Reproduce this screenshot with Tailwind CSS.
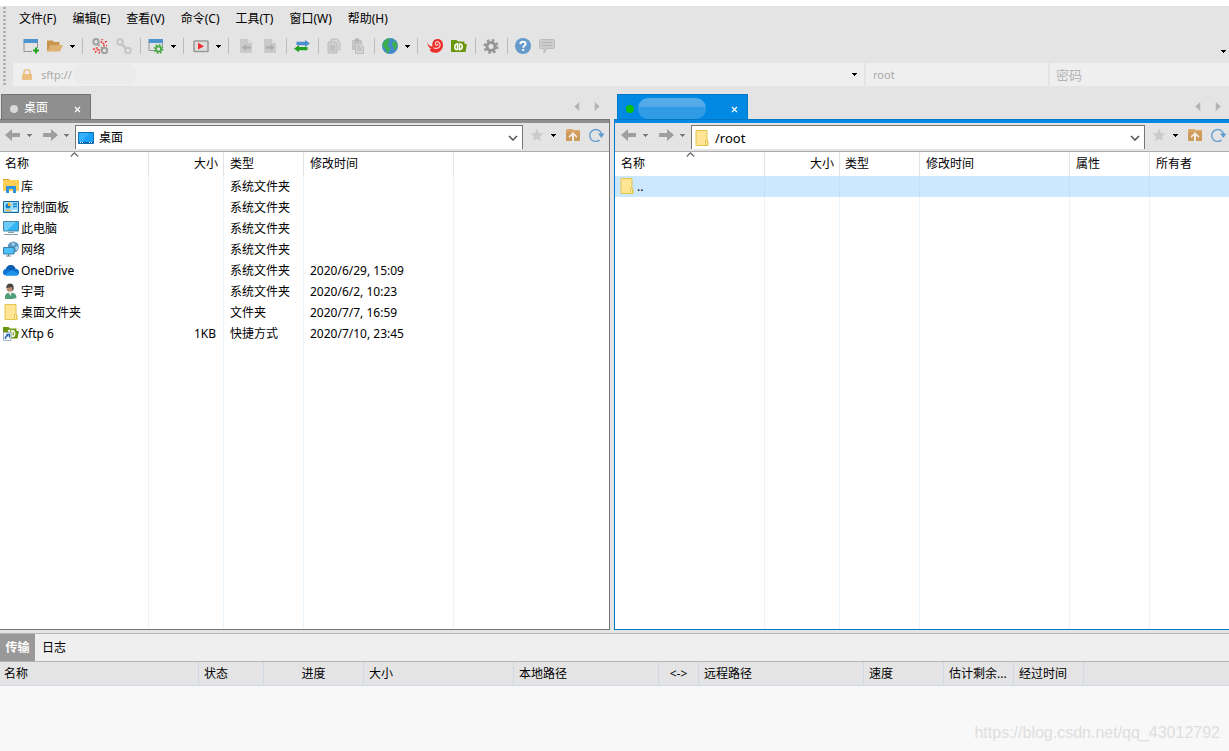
<!DOCTYPE html>
<html lang="zh-CN">
<head>
<meta charset="utf-8">
<meta name="viewport" content="width=device-width, initial-scale=1">
<title>Xftp 6</title>
<script src="https://cdn.jsdelivr.net/npm/@tailwindcss/browser@4"></script>
</head>
<body class="flex h-screen flex-col overflow-hidden bg-[#e4e4e4] font-['Noto_Sans','Noto_Sans_CJK_SC',sans-serif] text-xs text-black">

<svg class="hidden" aria-hidden="true">
  <symbol id="caret" viewBox="0 0 5 3"><path d="M0 0h5v1H4v1H3v1H2V2H1V1H0z" fill="currentColor"/></symbol>
  <symbol id="x" viewBox="0 0 7 7"><path d="M1 1l5 5M6 1L1 6" stroke="currentColor" stroke-width="1.1"/></symbol>
  <symbol id="tri-l" viewBox="0 0 6 10"><path d="M5.500 0v10L0 5z" fill="#b4b4b4"/></symbol>
  <symbol id="tri-r" viewBox="0 0 6 10"><path d="M.5 0v10L6 5z" fill="#b4b4b4"/></symbol>
  <symbol id="back" viewBox="0 0 16 12"><path d="M0 6l7-6v4h8v4H7v4z" fill="#9f9f9f"/></symbol>
  <symbol id="fwd" viewBox="0 0 16 12"><path d="M16 6L9 0v4H1v4h8v4z" fill="#9f9f9f"/></symbol>
  <symbol id="chev" viewBox="0 0 10 6"><path d="M1 1l4 4 4-4" fill="none" stroke="#444" stroke-width="1.300"/></symbol>
  <symbol id="sort" viewBox="0 0 9 5"><path d="M.8 4.500L4.500.8l3.700 3.700" fill="none" stroke="#666" stroke-width="1.200"/></symbol>
  <symbol id="star" viewBox="0 0 14 14"><path d="M7 .8l1.900 4.100 4.400.5-3.300 3 .9 4.500L7 10.700l-3.900 2.200.9-4.500-3.300-3 4.400-.5z" fill="#cbcbcb"/></symbol>
  <symbol id="up" viewBox="0 0 16 14"><path d="M1 2.500L2 1h5l1.500 1H15v11H1z" fill="#d9a766"/><path d="M1 13V5l2-1h12v9z" fill="#cf9b5c"/><path d="M8 4L3.500 8.500l1 1.200L7 7.500V13h2V7.500l2.500 2.200 1-1.200z" fill="#f1ece5"/></symbol>
  <symbol id="refresh" viewBox="0 0 16 14"><path d="M10.500 12.200A6 6 0 1 1 12.600 6" fill="none" stroke="#6ba2d3" stroke-width="1.500"/><path d="M9 5.500h6.500L12.300 10z" fill="#5b9bd1"/></symbol>
  <symbol id="folder" viewBox="0 0 14 16"><path d="M1 .5h11v11h1v4H1z" fill="#ffe594" stroke="#e5c44d"/><path d="M10.500 10.500h2v5h-2z" fill="#ffefb2" stroke="#e5c44d"/></symbol>
  <symbol id="desk" viewBox="0 0 16 12"><path d="M.5.500h15v11H.5z" fill="#18a0fb" stroke="#0b6db3"/><path d="M1 1h10L4 10H1z" fill="#35b2ff"/><path d="M1 10h14v1H1z" fill="#0c5e9c"/><path d="M2 10h1v1H2zM4 10h1v1H4zM11 10h1v1h-1zM13 10h1v1h-1z" fill="#fff"/></symbol>
  <symbol id="doc" viewBox="0 0 16 16"><path d="M2 1h8l4 4v10H2z" fill="#cacaca"/><path d="M10 1v4h4z" fill="#dedede"/></symbol>
</svg>

<div class="h-1.5 shrink-0 bg-white"></div>

<header class="flex shrink-0 pb-2">
  <div class="ml-[3px] w-[3px] shrink-0 bg-[radial-gradient(circle,#a9a9a9_1px,transparent_1.5px)] bg-[size:3px_4px]"></div>
  <div class="min-w-0 grow pl-[7px]">
    <nav class="flex h-[25px] items-center gap-4 pl-1.5 leading-5" aria-label="主菜单">
      <button>文件(F)</button><button>编辑(E)</button><button>查看(V)</button><button>命令(C)</button><button>工具(T)</button><button>窗口(W)</button><button>帮助(H)</button>
    </nav>
    <div class="flex h-8 items-center pb-0.5 pl-1.5" role="toolbar" aria-label="工具栏">
      <button class="flex w-6 justify-center" aria-label="新建"><svg class="size-4" viewBox="0 0 16 16"><path d="M1 4v9.500h8M14.500 4v6" fill="none" stroke="#929292"/><path d="M.5 1h14.500v4H.5z" fill="#4d93ce"/><path d="M10 12.500h6M13 9.500v6" stroke="#21a321" stroke-width="2"/></svg></button>
      <button class="flex w-6 justify-center" aria-label="打开"><svg class="size-4" viewBox="0 0 16 16"><path d="M0 13V2.500h5.500L7 4h5.500v3H4l-3 6z" fill="#c9954f"/><path d="M4 7h12l-3 6.500H0z" fill="#dfb171"/></svg></button>
      <button class="flex w-[10px] justify-center" aria-label="打开菜单"><svg class="h-[3px] w-[5px]"><use href="#caret"/></svg></button>
      <span class="flex h-4 w-[11px] justify-center"><i class="w-px bg-[#bcbcbc]"></i></span>
      <button class="flex w-6 justify-center" aria-label="断开"><svg class="size-4" viewBox="0 0 16 16"><g fill="none" stroke="#a0a0a0" stroke-width="2"><circle cx="4" cy="3.700" r="2.700"/><circle cx="12.500" cy="12.500" r="2.700"/><path d="M5.500 6l2 2M10.500 10.500L9 9"/></g><path d="M9 5l1.500-4M10.500 6l4.500-3M11 7.500h4M1 11.500l5-2M3 14.500l4-4M7 15.500l1-4" stroke="#ee3b3b" stroke-width="1.500" stroke-dasharray="2 1"/></svg></button>
      <button class="flex w-6 justify-center" aria-label="连接" disabled><svg class="size-4" viewBox="0 0 16 16"><g fill="none" stroke="#c6c6c6" stroke-width="2"><circle cx="4" cy="4" r="2.800"/><circle cx="12" cy="12.500" r="2.800"/><path d="M5.500 6l5 5" stroke-width="3"/></g></svg></button>
      <span class="flex h-4 w-2 justify-center"><i class="w-px bg-[#bcbcbc]"></i></span>
      <button class="flex w-6 justify-center" aria-label="属性"><svg class="size-4" viewBox="0 0 16 16"><path d="M1 4v8.500h6M14.500 4v4" fill="none" stroke="#929292"/><path d="M.5 1h14.500v4H.5z" fill="#4d93ce"/><circle cx="10.500" cy="11" r="2.600" fill="none" stroke="#45a845" stroke-width="1.800"/><circle cx="10.500" cy="11" r="4.200" fill="none" stroke="#45a845" stroke-width="1.500" stroke-dasharray="1.700 1.600"/></svg></button>
      <button class="flex w-[10px] justify-center" aria-label="属性菜单"><svg class="h-[3px] w-[5px]"><use href="#caret"/></svg></button>
      <span class="flex h-4 w-[11px] justify-center"><i class="w-px bg-[#bcbcbc]"></i></span>
      <button class="flex w-6 justify-center" aria-label="运行"><svg class="size-4" viewBox="0 0 16 16"><rect x="1" y="3" width="14" height="10.500" rx=".8" fill="#dedede" stroke="#999" stroke-width="1.600"/><path d="M5 4.800l6 3.400-6 3.400z" fill="#ee2b30"/></svg></button>
      <button class="flex w-[10px] justify-center" aria-label="运行菜单"><svg class="h-[3px] w-[5px]"><use href="#caret"/></svg></button>
      <span class="flex h-4 w-[11px] justify-center"><i class="w-px bg-[#bcbcbc]"></i></span>
      <button class="flex w-6 justify-center" aria-label="下载" disabled><svg class="size-4" viewBox="0 0 16 16"><use href="#doc"/><path d="M4 9.500L8 6v2.200h4.500v2.600H8V13z" fill="#adadad"/></svg></button>
      <button class="flex w-6 justify-center" aria-label="上传" disabled><svg class="size-4" viewBox="0 0 16 16"><use href="#doc"/><path d="M12.500 9.500L8.500 6v2.200H4v2.600h4.500V13z" fill="#adadad"/></svg></button>
      <span class="flex h-4 w-2 justify-center"><i class="w-px bg-[#bcbcbc]"></i></span>
      <button class="flex w-6 justify-center" aria-label="同步"><svg class="size-4" viewBox="0 0 16 16"><path d="M2.500 3.800H11V2l5 3.500L11 9V7.200H2.500z" fill="#4b8fd0"/><path d="M13.500 9H5V7L0 10.700l5 3.500v-2H13.500z" fill="#22a022"/></svg></button>
      <span class="flex h-4 w-2 justify-center"><i class="w-px bg-[#bcbcbc]"></i></span>
      <button class="flex w-6 justify-center" aria-label="复制" disabled><svg class="size-4" viewBox="0 0 16 16"><path d="M5 1h6l3 3v8H5z" fill="#d5d5d5" stroke="#bdbdbd"/><path d="M2 4h7l2 2v9H2z" fill="#cecece" stroke="#bdbdbd"/><path d="M4 8h5M4 10h5M4 12h5" stroke="#b3b3b3"/></svg></button>
      <button class="flex w-6 justify-center" aria-label="粘贴" disabled><svg class="size-4" viewBox="0 0 16 16"><path d="M2 2h10v10H2z" fill="#c4c4c4"/><path d="M5 .5h4v3H5z" fill="#b2b2b2"/><path d="M5.500 5.500h5l3 3v7h-8z" fill="#d5d5d5" stroke="#bdbdbd"/><path d="M7 10h5M7 12h5M7 8h3" stroke="#b3b3b3"/></svg></button>
      <span class="flex h-4 w-2 justify-center"><i class="w-px bg-[#bcbcbc]"></i></span>
      <button class="flex w-6 justify-center" aria-label="语言"><svg class="size-4" viewBox="0 0 16 16"><circle cx="8" cy="8" r="8" fill="#4489c9"/><path d="M1.500 4Q3.500 .8 7 .3L8 1.500 6.500 3l1 1.200L5.500 5.500l.7 1.500-1.700.8 3.500 1.700.3 2-1.800 1.800-.5 2-1.500-.8-.7-3.500L1 8.500Q.5 6 1.500 4zM10.500 4.500L13 3l1.700 2.500.5 3-1.700 3.300-1.700-.8-.3-2.500-1.500-1.500zM10.500 1l2 .8-1.500.9z" fill="#3eb049"/></svg></button>
      <button class="flex w-[10px] justify-center" aria-label="语言菜单"><svg class="h-[3px] w-[5px]"><use href="#caret"/></svg></button>
      <span class="flex h-4 w-[11px] justify-center"><i class="w-px bg-[#bcbcbc]"></i></span>
      <button class="flex w-6 justify-center" aria-label="Xshell"><svg class="size-4" viewBox="0 0 16 16"><path d="M0 4q2 4.500 5.500 4.500C4.500 4 7 1 10.500 1 14 1 16 3.500 16 7c0 4.500-3.500 7.800-7.500 7.800-3.500 0-5-1.300-6-3.300l2-.4Q1 9.500 0 4z" fill="#ed2f2b"/><path d="M6.500 9.800c4 1.700 6.800-.6 6.600-3.100C13 4.500 11.400 3.500 9.900 3.700 8.500 4 7.900 5.600 8.600 6.700c.8 1 2.500.6 2.300-.9" fill="none" stroke="#f8dada" stroke-width="1.100"/></svg></button>
      <button class="flex w-6 justify-center" aria-label="Xftp"><svg class="size-4" viewBox="0 0 16 16"><path d="M0 2h5.500L7 3.500h6.500V6H16l-1.500 8H0z" fill="#6a960c"/><path d="M6.500 12V5.800Q3.800 6.300 3.800 9T6 11.800M8.500 5.500v6.300Q11.300 11.500 11.300 8.800T9 5.900" fill="none" stroke="#fff" stroke-width="1.500"/></svg></button>
      <span class="flex h-4 w-2 justify-center"><i class="w-px bg-[#bcbcbc]"></i></span>
      <button class="flex w-6 justify-center" aria-label="选项"><svg class="size-4" viewBox="0 0 16 16"><circle cx="8" cy="8.500" r="6.300" fill="none" stroke="#969696" stroke-width="2.400" stroke-dasharray="2.550 2.400"/><circle cx="8" cy="8.500" r="4" fill="none" stroke="#969696" stroke-width="3"/></svg></button>
      <span class="flex h-4 w-2 justify-center"><i class="w-px bg-[#bcbcbc]"></i></span>
      <button class="flex w-6 justify-center" aria-label="帮助"><svg class="size-4" viewBox="0 0 16 16"><circle cx="8" cy="8" r="8" fill="#659acd"/><path d="M5.300 6.200Q5.500 3.800 8 3.800q2.600 0 2.600 2.200C10.600 7.500 8.200 7.800 8.200 9.700M8.200 11v2" fill="none" stroke="#fff" stroke-width="1.900"/></svg></button>
      <button class="flex w-6 justify-center" aria-label="反馈" disabled><svg class="size-4" viewBox="0 0 16 16"><path d="M1.500 1.500h13q1 0 1 1v7q0 1-1 1H8l-3 4.500v-4.500H1.500q-1 0-1-1v-7q0-1 1-1z" fill="#cdcdcd" stroke="#bdbdbd"/><path d="M3 4.500h10M3 7.500h10" stroke="#b5b5b5"/></svg></button>
      <button class="ml-auto flex w-3 justify-center self-end pb-2" aria-label="更多"><svg class="h-[3px] w-[5px]"><use href="#caret"/></svg></button>
    </div>
    <form class="grid h-[23px] grid-cols-[851fr_182fr_179fr] gap-[2px] text-[#a9a9a9]">
      <div class="flex min-w-0 items-center bg-[#efefef] pl-[9px] pr-1">
        <svg class="h-3 w-2.5 shrink-0" viewBox="0 0 10 12"><path d="M2 6V3.500a3 3 0 0 1 6 0V6" fill="none" stroke="#ecbf82" stroke-width="1.600"/><rect y="5" width="10" height="6" rx=".8" fill="#ecbf82"/></svg>
        <label class="relative ml-[9px] flex min-w-0 grow"><span class="sr-only">主机</span><input class="h-[22px] w-full text-[11px] leading-[22px] outline-none" value="sftp://"><span class="absolute left-8 top-0 h-5 w-16 rounded-[9px] bg-[#ebebeb]"></span></label>
        <button type="button" class="flex w-3 justify-center text-black" aria-label="历史记录"><svg class="h-[3px] w-[5px]"><use href="#caret"/></svg></button>
      </div>
      <input class="min-w-0 bg-[#efefef] px-[7px] text-[11px] leading-5 outline-none" aria-label="用户名" value="root">
      <input type="text" class="min-w-0 bg-[#efefef] px-[6px] text-[13px] leading-5 outline-none placeholder:text-[#b4b4b4]" aria-label="密码" placeholder="密码">
    </form>
  </div>
</header>

<main class="grid min-h-0 grow grid-cols-[610fr_615fr] gap-1">
  <section class="flex min-w-0 flex-col" aria-label="本地">
    <div class="flex h-[25px] shrink-0 items-center pl-px">
      <div class="flex h-full w-[90px] items-center border border-b-0 border-[#747474] bg-[#8f8f8f] pl-2 pr-[7px] text-white">
        <span class="mt-1 size-2 rounded-full bg-[#d8d8d8]"></span>
        <button class="ml-1.5 mt-0.5 leading-5">桌面</button>
        <button class="ml-auto flex size-3 items-center justify-center" aria-label="关闭标签"><svg class="mt-1 size-[7px] shrink-0"><use href="#x"/></svg></button>
      </div>
      <button class="ml-auto flex w-5 justify-center" aria-label="上一个"><svg class="h-[9px] w-1.5"><use href="#tri-l"/></svg></button>
      <button class="mr-[3px] flex w-5 justify-center" aria-label="下一个"><svg class="h-[9px] w-1.5"><use href="#tri-r"/></svg></button>
    </div>
    <div class="flex min-h-0 grow flex-col border-b border-r border-t border-[#777777]">
      <div class="h-[3px] shrink-0 bg-[#8f8f8f]"></div>
      <div class="flex h-[29px] shrink-0 items-center border-b border-[#adadad] pb-1 pl-[5px]">
        <button aria-label="后退"><svg class="h-3 w-4"><use href="#back"/></svg></button>
        <button class="ml-1.5 text-[#777777]" aria-label="后退记录"><svg class="h-[3px] w-[5px]"><use href="#caret"/></svg></button>
        <button class="ml-[10px]" aria-label="前进"><svg class="h-3 w-4"><use href="#fwd"/></svg></button>
        <button class="ml-1.5 text-[#777777]" aria-label="前进记录"><svg class="h-[3px] w-[5px]"><use href="#caret"/></svg></button>
        <label class="ml-1.5 mt-1 flex h-6 min-w-0 grow items-center border border-b-0 border-[#777777] bg-white pl-0.5 pr-1">
          <svg class="h-3 w-4 shrink-0"><use href="#desk"/></svg>
          <span class="sr-only">本地路径</span>
          <input class="ml-[5px] h-[22px] min-w-0 grow leading-[22px] outline-none" value="桌面">
          <svg class="h-1.5 w-2.5 shrink-0"><use href="#chev"/></svg>
        </label>
        <button class="ml-[7px]" aria-label="收藏"><svg class="size-3.5"><use href="#star"/></svg></button>
        <button class="ml-[7px]" aria-label="收藏菜单"><svg class="h-[3px] w-[5px]"><use href="#caret"/></svg></button>
        <button class="ml-[9px]" aria-label="上级"><svg class="h-3.5 w-4"><use href="#up"/></svg></button>
        <button class="ml-2 mr-1" aria-label="刷新"><svg class="h-3.5 w-4"><use href="#refresh"/></svg></button>
      </div>
      <div class="min-h-0 grow overflow-hidden bg-white">
        <table class="h-full w-full table-fixed border-separate border-spacing-0 text-left leading-5 [&_div>svg]:mb-0.5 [&_div>svg]:size-4 [&_td]:whitespace-nowrap [&_td]:border-r [&_td]:border-[#e9f1fb] [&_th]:border-r [&_th]:border-[#e3e3e3] [&_th]:font-normal [&_tr>:last-child]:border-r-0">
          <colgroup><col class="w-[149px]"><col class="w-[75px]"><col class="w-[80px]"><col class="w-[150px]"><col></colgroup>
          <thead><tr class="h-6"><th class="relative pl-[5px]">名称<svg class="absolute left-[70px] top-0 h-[5px] w-[9px]"><use href="#sort"/></svg></th><th class="pr-[5px] text-right">大小</th><th class="pl-1.5">类型</th><th class="pl-1.5">修改时间</th><td></td></tr></thead>
          <tbody>
            <tr class="h-[21px]"><td class="pl-[3px]"><div class="flex items-center gap-0.5"><svg viewBox="0 0 16 16"><path d="M0 1h6l1 1.500H0z" fill="#dc9a0c"/><path d="M0 3l7-1h9v11H0z" fill="#ffcf55"/><path d="M3 8h10v7h-3v-4H6v4H3z" fill="#2e92dd"/></svg>库</div></td><td></td><td class="pl-1.5">系统文件夹</td><td></td><td></td></tr>
            <tr class="h-[21px]"><td class="pl-[3px]"><div class="flex items-center gap-0.5"><svg viewBox="0 0 16 16"><path d="M.5 2.500h15v11H.5z" fill="#9bdcff" stroke="#1269a3"/><circle cx="5" cy="7" r="2.500" fill="#1482cf"/><path d="M5 7V3.500A3 3 0 0 1 8 7z" fill="#f6b12c"/><path d="M10 5h4M10 7.500h4" stroke="#1482cf" stroke-width="1.500"/><path d="M2.500 11.500h5" stroke="#f6b12c" stroke-width="1.500"/><path d="M9 11.500h5" stroke="#fff"/></svg>控制面板</div></td><td></td><td class="pl-1.5">系统文件夹</td><td></td><td></td></tr>
            <tr class="h-[21px]"><td class="pl-[3px]"><div class="flex items-center gap-0.5"><svg viewBox="0 0 16 16"><path d="M.5 1.500h15v9.500H.5z" fill="#30b4f5" stroke="#4b87a5"/><path d="M1 2h12L4 10.500H1z" fill="#6bcbfb"/><path d="M5 12.500h6M1 14.500h14" stroke="#8ba0ad"/></svg>此电脑</div></td><td></td><td class="pl-1.5">系统文件夹</td><td></td><td></td></tr>
            <tr class="h-[21px]"><td class="pl-[3px]"><div class="flex items-center gap-0.5"><svg viewBox="0 0 16 16"><circle cx="10.300" cy="6" r="5.600" fill="#5798c5"/><path d="M8 2l3-.5 1 2-2 2zM12 6l3-1v3l-2 1.500z" fill="#a9cfe6"/><path d="M.5 6.500h10.500v6.500H.5z" fill="#4dc0fb" stroke="#3a7ea5"/><path d="M5.500 13v2M3 15h5" stroke="#62869b"/></svg>网络</div></td><td></td><td class="pl-1.5">系统文件夹</td><td></td><td></td></tr>
            <tr class="h-[21px]"><td class="pl-[3px]"><div class="flex items-center gap-0.5"><svg viewBox="0 0 16 16"><path d="M3.500 13.500Q0 13.500 0 10.500 0 7.300 3 6.800 4.500 3 8 3q3 0 4.300 3.500Q16 7 16 10.300t-3 3.200z" fill="#0d72d2"/><path d="M3 6.800Q4.500 3 8 3q3 0 4.300 3.500L9 8z" fill="#0b5cad"/><path d="M1.500 12.800L9 8l6.500 3.800q-.8 1.700-2.500 1.700H3.500z" fill="#1f94ec"/></svg>OneDrive</div></td><td></td><td class="pl-1.5">系统文件夹</td><td class="pl-1.5">2020/6/29, 15:09</td><td></td></tr>
            <tr class="h-[21px]"><td class="pl-[3px]"><div class="flex items-center gap-0.5"><svg viewBox="0 0 16 16"><path d="M2 16q-.5-5 2.500-6l3-.7 3 .7q3 1 3 5l-4 1z" fill="#4f9e78"/><path d="M5 9l2.500 4L9 9z" fill="#e8ece8"/><circle cx="6.800" cy="5.500" r="3.200" fill="#bd8d70"/><path d="M3.300 5Q3 .5 7.500.5q4 .5 3 6.500L9.500 8 9 4z" fill="#4c4540"/></svg>宇哥</div></td><td></td><td class="pl-1.5">系统文件夹</td><td class="pl-1.5">2020/6/2, 10:23</td><td></td></tr>
            <tr class="h-[21px]"><td class="pl-[3px]"><div class="flex items-center gap-0.5"><svg viewBox="0 0 16 16"><use href="#folder" x="1" width="14" height="16"/></svg>桌面文件夹</div></td><td></td><td class="pl-1.5">文件夹</td><td class="pl-1.5">2020/7/7, 16:59</td><td></td></tr>
            <tr class="h-[21px]"><td class="pl-[3px]"><div class="flex items-center gap-0.5"><svg viewBox="0 0 16 16"><path d="M0 2h5.500L7 3.500h6.500V6H16l-1.500 7.500H0z" fill="#6a960c"/><path d="M9 12V5.500Q11.700 6 11.700 8.800T9.500 11.800M6.500 7V5.500L5 6" fill="none" stroke="#fff" stroke-width="1.400"/><path d="M.5 7.500h7.500v8H.5z" fill="#f6f8fb" stroke="#a5b6c6"/><path d="M2.500 14Q2 11 5 10.500M3.500 9.500h3v3" fill="none" stroke="#1c62b0" stroke-width="1.400"/></svg>Xftp 6</div></td><td class="pr-[7px] text-right">1KB</td><td class="pl-1.5">快捷方式</td><td class="pl-1.5">2020/7/10, 23:45</td><td></td></tr>
            <tr><td></td><td></td><td></td><td></td><td></td></tr>
          </tbody>
        </table>
      </div>
    </div>
  </section>

  <section class="flex min-w-0 flex-col" aria-label="远程">
    <div class="flex h-[25px] shrink-0 items-center pl-[3px]">
      <div class="flex h-full w-[131px] items-center border border-b-0 border-[#0078c8] bg-[#0289e3] pl-2 pr-[7px] text-white">
        <span class="mt-1 size-2 rounded-full bg-[#0cc00c]"></span>
        <button class="ml-1 mt-0.5 h-[21px] w-[68px] rounded-[10px] bg-linear-to-b from-[#53abe8] from-40% to-[#319ce6] to-45%" aria-label="远程会话"></button>
        <button class="ml-auto flex size-3 items-center justify-center" aria-label="关闭标签"><svg class="mt-1 size-[7px] shrink-0"><use href="#x"/></svg></button>
      </div>
      <button class="ml-auto flex w-5 justify-center" aria-label="上一个"><svg class="h-[9px] w-1.5"><use href="#tri-l"/></svg></button>
      <button class="mr-px flex w-5 justify-center" aria-label="下一个"><svg class="h-[9px] w-1.5"><use href="#tri-r"/></svg></button>
    </div>
    <div class="flex min-h-0 grow flex-col border-b border-l border-t border-[#0078c8]">
      <div class="h-[3px] shrink-0 bg-[#0289e3]"></div>
      <div class="flex h-[29px] shrink-0 items-center border-b border-[#adadad] pb-1 pl-[6px]">
        <button aria-label="后退"><svg class="h-3 w-4"><use href="#back"/></svg></button>
        <button class="ml-1.5 text-[#777777]" aria-label="后退记录"><svg class="h-[3px] w-[5px]"><use href="#caret"/></svg></button>
        <button class="ml-[10px]" aria-label="前进"><svg class="h-3 w-4"><use href="#fwd"/></svg></button>
        <button class="ml-1.5 text-[#777777]" aria-label="前进记录"><svg class="h-[3px] w-[5px]"><use href="#caret"/></svg></button>
        <label class="ml-1.5 mt-1 flex h-6 min-w-0 grow items-center border border-b-0 border-[#777777] bg-white pl-[3px] pr-1">
          <svg class="h-4 w-3.5 shrink-0"><use href="#folder"/></svg>
          <span class="sr-only">远程路径</span>
          <input class="ml-1.5 h-[22px] min-w-0 grow text-[13px] leading-[22px] outline-none" value="/root">
          <svg class="h-1.5 w-2.5 shrink-0"><use href="#chev"/></svg>
        </label>
        <button class="ml-[7px]" aria-label="收藏"><svg class="size-3.5"><use href="#star"/></svg></button>
        <button class="ml-[7px]" aria-label="收藏菜单"><svg class="h-[3px] w-[5px]"><use href="#caret"/></svg></button>
        <button class="ml-[9px]" aria-label="上级"><svg class="h-3.5 w-4"><use href="#up"/></svg></button>
        <button class="ml-2 mr-0.5" aria-label="刷新"><svg class="h-3.5 w-4"><use href="#refresh"/></svg></button>
      </div>
      <div class="min-h-0 grow overflow-hidden bg-white">
        <table class="h-full w-full table-fixed border-separate border-spacing-0 text-left leading-5 [&_td]:whitespace-nowrap [&_td]:border-r [&_td]:border-[#e9f1fb] [&_th]:border-r [&_th]:border-[#e3e3e3] [&_th]:font-normal [&_tr>:last-child]:border-r-0">
          <colgroup><col class="w-[150px]"><col class="w-[75px]"><col class="w-[80px]"><col class="w-[150px]"><col class="w-[80px]"><col></colgroup>
          <thead><tr class="h-6"><th class="relative pl-1.5">名称<svg class="absolute left-[71px] top-0 h-[5px] w-[9px]"><use href="#sort"/></svg></th><th class="pr-[5px] text-right">大小</th><th class="pl-[5px]">类型</th><th class="pl-1.5">修改时间</th><th class="pl-1.5">属性</th><th class="pl-1.5">所有者</th></tr></thead>
          <tbody>
            <tr class="h-[21px] bg-[#cce8ff] [&>td]:border-[#c0dffb]"><td class="pl-[5px]"><div class="flex items-center gap-[3px]"><svg class="mb-0.5 h-4 w-3.5"><use href="#folder"/></svg>..</div></td><td></td><td></td><td></td><td></td><td></td></tr>
            <tr><td></td><td></td><td></td><td></td><td></td><td></td></tr>
          </tbody>
        </table>
      </div>
    </div>
  </section>
</main>

<section class="mt-[3px] flex shrink-0 flex-col border-t border-[#b4b4b4]" aria-label="传输">
  <div class="flex h-7 border-b border-[#b4b4b4] bg-[#efefef]">
    <button class="w-[35px] bg-[#999999] font-bold text-white">传输</button>
    <button class="px-[7px]">日志</button>
  </div>
  <table class="w-full table-fixed border-separate border-spacing-0 text-left leading-5 [&_th]:h-6 [&_th]:whitespace-nowrap [&_th]:border-b [&_th]:border-r [&_th]:border-[#d0d9e3] [&_th]:font-normal">
    <colgroup><col class="w-[199px]"><col class="w-[65px]"><col class="w-[100px]"><col class="w-[150px]"><col class="w-[145px]"><col class="w-10"><col class="w-[165px]"><col class="w-20"><col class="w-[70px]"><col class="w-[70px]"><col></colgroup>
    <thead><tr><th class="pl-1">名称</th><th class="pl-[5px]">状态</th><th class="text-center">进度</th><th class="pl-[5px]">大小</th><th class="pl-[5px]">本地路径</th><th class="text-center">&lt;-&gt;</th><th class="pl-[5px]">远程路径</th><th class="pl-[5px]">速度</th><th class="pl-[5px]">估计剩余...</th><th class="pl-[5px]">经过时间</th><td class="border-b border-[#d0d9e3]"></td></tr></thead>
  </table>
  <div class="flex h-[65px] justify-end bg-[#f8f8f8] pr-[9px] pt-[37px]"><span class="font-['Liberation_Sans',sans-serif] text-base leading-5 text-[#dedede]">https://blog.csdn.net/qq_43012792</span></div>
</section>
</body>
</html>
